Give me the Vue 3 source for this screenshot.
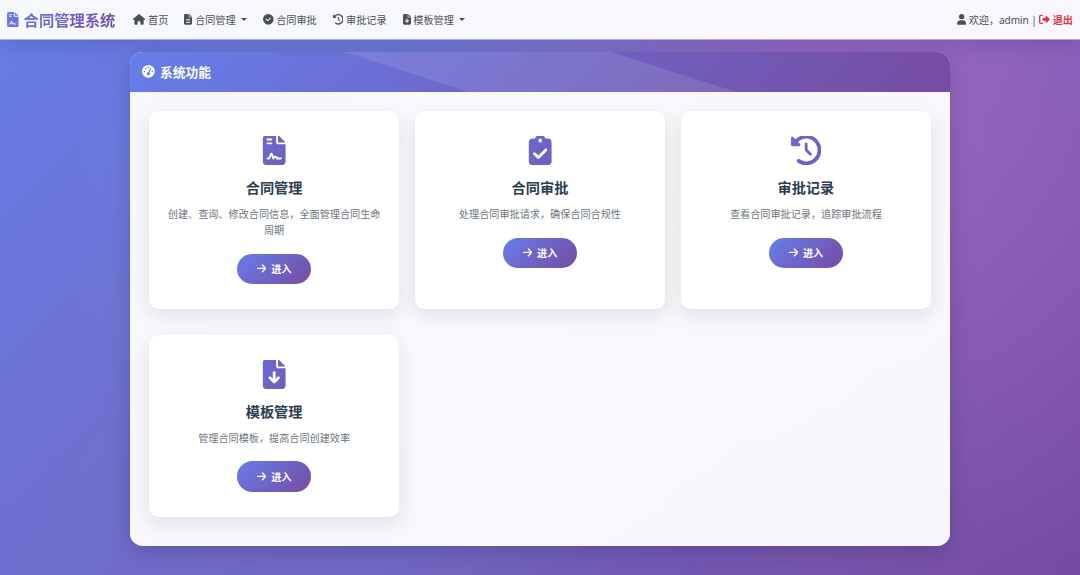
<script setup>
import { ref } from 'vue'

// --- IKON (viewBox + path) ---
const filePath = 'M64 0C28.7 0 0 28.7 0 64V448c0 35.3 28.7 64 64 64H320c35.3 0 64-28.7 64-64V160H256c-17.7 0-32-14.3-32-32V0H64zM256 0V128H384L256 0z'

const icons = {
  home: { w: 576, d: 'M575.8 255.5c0 18-15 32.1-32 32.1h-32l.7 160.2c0 2.7-.2 5.4-.5 8.1V472c0 22.1-17.9 40-40 40H456c-1.1 0-2.2 0-3.3-.1c-1.4 .1-2.8 .1-4.2 .1H416 392c-22.1 0-40-17.9-40-40V448 384c0-17.7-14.3-32-32-32H256c-17.7 0-32 14.3-32 32v64 24c0 22.1-17.9 40-40 40H160 128.1c-1.5 0-3-.1-4.5-.2c-1.2 .1-2.4 .2-3.6 .2H104c-22.1 0-40-17.9-40-40V360c0-.9 0-1.9 .1-2.8V287.6H32c-18 0-32-14-32-32.1c0-9 3-17 10-24L266.4 8c7-7 15-8 22-8s15 2 21 7L564.8 231.5c8 7 12 15 11 24z' },
  contract: { w: 384, d: filePath + 'M80 64h64c8.8 0 16 7.2 16 16s-7.2 16-16 16H80c-8.8 0-16-7.2-16-16s7.2-16 16-16zm0 64h64c8.8 0 16 7.2 16 16s-7.2 16-16 16H80c-8.8 0-16-7.2-16-16s7.2-16 16-16zm54.2 253.8c-6.1 20.3-24.8 34.2-46 34.2H80c-8.8 0-16-7.2-16-16s7.2-16 16-16h8.2c7.1 0 13.3-4.6 15.3-11.4l14.9-49.5c3.4-11.3 13.8-19.1 25.6-19.1s22.2 7.7 25.6 19.1l11.6 38.6c7.4-6.2 16.8-9.7 26.8-9.7c15.9 0 30.4 9 37.5 23.2l4.4 8.8H304c8.8 0 16 7.2 16 16s-7.2 16-16 16H240c-6.1 0-11.6-3.4-14.3-8.8l-8.8-17.7c-1.7-3.4-5.1-5.5-8.8-5.5s-7.2 2.1-8.8 5.5l-8.8 17.7c-2.9 5.9-9.2 9.4-15.7 8.8s-12.1-5.1-13.9-11.3L144 349l-9.8 32.8z' },
  file: { w: 384, d: filePath + 'M112 256H272c8.8 0 16 7.2 16 16s-7.2 16-16 16H112c-8.8 0-16-7.2-16-16s7.2-16 16-16zm0 64H272c8.8 0 16 7.2 16 16s-7.2 16-16 16H112c-8.8 0-16-7.2-16-16s7.2-16 16-16zm0 64H272c8.8 0 16 7.2 16 16s-7.2 16-16 16H112c-8.8 0-16-7.2-16-16s7.2-16 16-16z' },
  download: { w: 384, d: filePath + 'M216 232V334.1l31-31c9.4-9.4 24.6-9.4 33.9 0s9.4 24.6 0 33.9l-72 72c-9.4 9.4-24.6 9.4-33.9 0l-72-72c-9.4-9.4-9.4-24.6 0-33.9s24.6-9.4 33.9 0l31 31V232c0-13.3 10.7-24 24-24s24 10.7 24 24z' },
  check: { w: 512, d: 'M256 512A256 256 0 1 0 256 0a256 256 0 1 0 0 512zM369 209L241 337c-9.4 9.4-24.6 9.4-33.9 0l-64-64c-9.4-9.4-9.4-24.6 0-33.9s24.6-9.4 33.9 0l47 47L335 175c9.4-9.4 24.6-9.4 33.9 0s9.4 24.6 0 33.9z' },
  history: { w: 512, d: 'M75 75L41 41C25.9 25.9 0 36.6 0 57.9V168c0 13.3 10.7 24 24 24H134.1c21.4 0 32.1-25.9 17-41l-30.8-30.8C155 85.5 203 64 256 64c106 0 192 86 192 192s-86 192-192 192c-40.8 0-78.6-12.7-109.7-34.4c-14.5-10.1-34.4-6.6-44.6 7.9s-6.6 34.4 7.9 44.6C151.2 495 201.7 512 256 512c141.4 0 256-114.6 256-256S397.4 0 256 0C185.3 0 121.3 28.7 75 75zm181 53c-13.3 0-24 10.7-24 24V256c0 6.4 2.5 12.5 7 17l72 72c9.4 9.4 24.6 9.4 33.9 0s9.4-24.6 0-33.9l-65-65V152c0-13.3-10.7-24-24-24z' },
  clipboard: { w: 384, d: 'M192 0c-41.8 0-77.4 26.7-90.5 64H64C28.7 64 0 92.7 0 128V448c0 35.3 28.7 64 64 64H320c35.3 0 64-28.7 64-64V128c0-35.3-28.7-64-64-64H282.5C269.4 26.7 233.8 0 192 0zm0 64a32 32 0 1 1 0 64 32 32 0 1 1 0-64zM305 273L177 401c-9.4 9.4-24.6 9.4-33.9 0L79 337c-9.4-9.4-9.4-24.6 0-33.9s24.6-9.4 33.9 0l47 47L271 239c9.4-9.4 24.6-9.4 33.9 0s9.4 24.6 0 33.9z' },
}

// --- STATE ---
const username = ref('admin')

const menus = ref([
  { label: '首页', icon: 'home' },
  { label: '合同管理', icon: 'file', dropdown: true },
  { label: '合同审批', icon: 'check' },
  { label: '审批记录', icon: 'history' },
  { label: '模板管理', icon: 'download', dropdown: true },
])

const features = ref([
  { title: '合同管理', icon: 'contract', desc: '创建、查询、修改合同信息，全面管理合同生命周期' },
  { title: '合同审批', icon: 'clipboard', desc: '处理合同审批请求，确保合同合规性' },
  { title: '审批记录', icon: 'history', desc: '查看合同审批记录，追踪审批流程' },
  { title: '模板管理', icon: 'download', desc: '管理合同模板，提高合同创建效率' },
])
</script>

<template>
  <div class="page">
    <nav class="navbar">
      <a class="brand">
        <svg class="brand-icon" viewBox="0 0 384 512">
          <defs>
            <linearGradient id="brandFill" x1="0" y1="0" x2="1" y2="1">
              <stop offset="0" stop-color="#667eea" />
              <stop offset="1" stop-color="#6a74db" />
            </linearGradient>
          </defs>
          <path fill="url(#brandFill)" fill-rule="evenodd" :d="icons.contract.d" />
        </svg>
        <span class="brand-text">合同管理系统</span>
      </a>
      <div class="nav-menu">
        <a v-for="menu in menus" :key="menu.label" class="nav-link">
          <svg class="icon" :viewBox="`0 0 ${icons[menu.icon].w} 512`">
            <path fill-rule="evenodd" :d="icons[menu.icon].d" />
          </svg>
          <span>{{ menu.label }}</span>
          <i v-if="menu.dropdown" class="caret"></i>
        </a>
      </div>
      <div class="nav-user">
        <svg class="icon" viewBox="0 0 448 512">
          <path d="M224 256A128 128 0 1 0 224 0a128 128 0 1 0 0 256zm-45.7 48C79.8 304 0 383.8 0 482.3C0 498.7 13.3 512 29.7 512H418.3c16.4 0 29.7-13.3 29.7-29.7C448 383.8 368.2 304 269.7 304H178.3z" />
        </svg>
        <span>欢迎，{{ username }} |</span>
        <a class="logout">
          <svg class="icon" viewBox="0 0 512 512">
            <path d="M377.9 105.9L500.7 228.7c7.2 7.2 11.3 17.1 11.3 27.3s-4.1 20.1-11.3 27.3L377.9 406.1c-6.4 6.4-15 9.9-24 9.9c-18.7 0-33.9-15.2-33.9-33.9l0-62.1-128 0c-17.7 0-32-14.3-32-32l0-64c0-17.7 14.3-32 32-32l128 0 0-62.1c0-18.7 15.2-33.9 33.9-33.9c9 0 17.6 3.6 24 9.9zM160 96L96 96c-17.7 0-32 14.3-32 32l0 256c0 17.7 14.3 32 32 32l64 0c17.7 0 32 14.3 32 32s-14.3 32-32 32l-64 0c-53 0-96-43-96-96L0 128C0 75 43 32 96 32l64 0c17.7 0 32 14.3 32 32s-14.3 32-32 32z" />
          </svg>
          <span>退出</span>
        </a>
      </div>
    </nav>

    <main class="panel">
      <div class="panel-header">
        <svg class="icon" viewBox="0 0 512 512">
          <path fill-rule="evenodd" d="M0 256a256 256 0 1 1 512 0A256 256 0 1 1 0 256zM288 96a32 32 0 1 0 -64 0 32 32 0 1 0 64 0zM256 416c35.3 0 64-28.7 64-64c0-17.4-6.9-33.1-18.1-44.6L366 161.7c5.3-12.1-.2-26.3-12.3-31.6s-26.3 .2-31.6 12.3L257.9 288c-.6 0-1.3 0-1.9 0c-35.3 0-64 28.7-64 64s28.7 64 64 64zM176 144a32 32 0 1 0 -64 0 32 32 0 1 0 64 0zM96 288a32 32 0 1 0 0-64 32 32 0 1 0 0 64zm352-32a32 32 0 1 0 -64 0 32 32 0 1 0 64 0z" />
        </svg>
        <span>系统功能</span>
      </div>
      <div class="panel-body">
        <div v-for="item in features" :key="item.title" class="card">
          <svg class="card-icon" :viewBox="`${(icons[item.icon].w - 512) / 2} 20 512 492`">
            <defs>
              <linearGradient :id="`fill-${item.icon}`" x1="0" y1="0" x2="1" y2="1">
                <stop offset="0" stop-color="#6c6acf" />
                <stop offset="1" stop-color="#705ebe" />
              </linearGradient>
            </defs>
            <path :fill="`url(#fill-${item.icon})`" fill-rule="evenodd" :d="icons[item.icon].d" />
          </svg>
          <h5>{{ item.title }}</h5>
          <p>{{ item.desc }}</p>
          <a class="btn">
            <svg class="icon" viewBox="0 0 448 512">
              <path d="M438.6 278.6c12.5-12.5 12.5-32.8 0-45.3l-160-160c-12.5-12.5-32.8-12.5-45.3 0s-12.5 32.8 0 45.3L338.8 224 32 224c-17.7 0-32 14.3-32 32s14.3 32 32 32l306.7 0L233.4 393.4c-12.5 12.5-12.5 32.8 0 45.3s32.8 12.5 45.3 0l160-160z" />
            </svg>
            <span>进入</span>
          </a>
        </div>
      </div>
    </main>
  </div>
</template>

<style>
body {
  margin: 0;
  overflow: hidden;
}
</style>

<style scoped>
/* --- General Layout --- */
.page {
  height: 575px;
  box-sizing: border-box;
  font-family: "Noto Sans", "Noto Sans CJK SC", sans-serif;
  font-size: 10.15px;
  color: #495057;
  background:
    radial-gradient(circle at 20% 80%, rgba(120, 119, 198, 0.3) 0%, transparent 50%),
    radial-gradient(circle at 80% 20%, rgba(255, 119, 198, 0.3) 0%, transparent 50%),
    radial-gradient(circle at 40% 40%, rgba(120, 219, 255, 0.2) 0%, transparent 50%),
    linear-gradient(135deg, #667eea 0%, #764ba2 100%);
}

.icon {
  height: 1em;
  flex: none;
  fill: currentColor;
}

/* --- Navbar --- */
.navbar {
  height: 40px;
  box-sizing: border-box;
  display: flex;
  align-items: center;
  padding: 0 7px;
  background: rgba(255, 255, 255, 0.95);
  background-clip: padding-box;
  border-bottom: 1px solid rgba(255, 255, 255, 0.4);
  box-shadow: 0 5px 20px rgba(0, 0, 0, 0.12);
}

.brand {
  display: flex;
  align-items: center;
  gap: 5px;
  font-size: 15.3px;
  font-weight: 700;
}

.brand-icon {
  width: 11.6px;
  height: 15.3px;
}

.brand-text {
  margin-top: -2px;
  background: linear-gradient(135deg, #6a74dc, #764ba2);
  -webkit-background-clip: text;
  background-clip: text;
  color: transparent;
}

.nav-menu {
  display: flex;
  gap: 16px;
  margin-left: 18px;
}

.nav-link,
.nav-user,
.logout {
  display: flex;
  align-items: center;
  gap: 2.7px;
}

.nav-link .icon,
.nav-user .icon {
  height: 10.7px;
}

.caret {
  margin-left: 2.6px;
  border-top: 3px solid currentColor;
  border-left: 3px solid transparent;
  border-right: 3px solid transparent;
}

.nav-user {
  margin-left: auto;
  letter-spacing: -0.1px;
}

.logout {
  color: #dc3545;
  font-weight: 700;
  letter-spacing: 0;
}

/* --- Panel --- */
.panel {
  width: 820.4px;
  height: 494.5px;
  margin: 11.5px auto 0;
  border-radius: 12.6px;
  background: rgba(255, 255, 255, 0.95);
  box-shadow: 0 6px 22px rgba(0, 0, 0, 0.17);
  overflow: hidden;
}

.panel-header {
  position: relative;
  height: 40.5px;
  display: flex;
  align-items: center;
  gap: 5px;
  padding-left: 12.6px;
  font-size: 12.7px;
  font-weight: 700;
  color: #fff;
  background: linear-gradient(135deg, #667eea 0%, #764ba2 100%);
}

.panel-header span {
  margin-top: -1px;
}

/* kilau miring di header */
.panel-header::before {
  content: '';
  position: absolute;
  inset: 0;
  background: rgba(255, 255, 255, 0.1);
  clip-path: polygon(213px 0, 480px 0, 607px 100%, 339px 100%);
}

.panel-body {
  display: grid;
  grid-template-columns: repeat(3, 1fr);
  gap: 25.5px 15.3px;
  padding: 19px;
}

/* --- Card --- */
.card {
  display: flex;
  flex-direction: column;
  align-items: center;
  padding: 25px 17px;
  border-radius: 9.5px;
  background: #fff;
  text-align: center;
  box-shadow: 0 6px 20px rgba(0, 0, 0, 0.1);
}

.card-icon {
  width: 30.4px;
  height: 29.2px;
  margin-bottom: 13.9px;
}

.card h5 {
  margin: 0 0 10px;
  font-size: 14.2px;
  line-height: 17px;
  font-weight: 700;
  color: #2c3e50;
}

.card p {
  margin: 0 0 15.5px;
  line-height: 16px;
  color: #6c757d;
}

.btn {
  display: flex;
  align-items: center;
  justify-content: center;
  gap: 5px;
  width: 73.5px;
  height: 30.6px;
  border-radius: 15.8px;
  font-weight: 700;
  color: #fff;
  background: linear-gradient(135deg, #667eea 0%, #764ba2 100%);
}

.btn .icon {
  height: 10.8px;
}
</style>
